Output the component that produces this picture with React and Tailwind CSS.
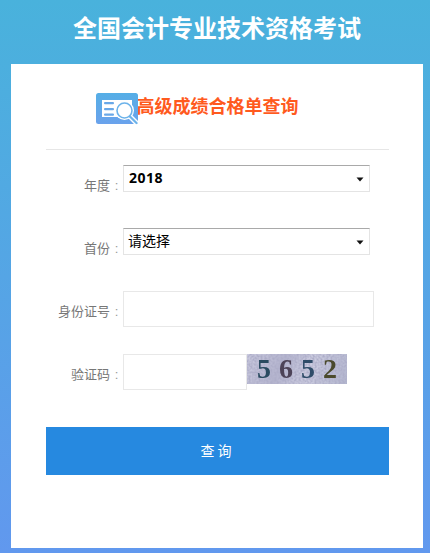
const cjk = "font-['Liberation_Sans','Noto_Sans_CJK_SC',sans-serif]";

function Field({ label, shift, children, className }) {
  return (
    <div className={`flex ${className}`}>
      <label className={`w-[77px] shrink-0 self-end text-right text-[13px] leading-[20px] text-[#777] ${shift}`}>
        {label}
        <span className="inline-block w-[13px] text-center text-[#999]">:</span>
      </label>
      {children}
    </div>
  );
}

function Select({ value, bold }) {
  return (
    <div className="relative h-[27px] w-[247px] border border-[#e4e4e4] border-t-[#a9a9a9] bg-white">
      <select
        defaultValue={value}
        className={`h-full w-full appearance-none bg-transparent outline-none text-black ${bold ? "pb-[5px] pl-[5px] text-[14px] font-bold tracking-[0.5px] font-['Noto_Sans',sans-serif]" : "pb-[3px] pl-[4px] text-[14px]"}`}
      >
        <option>{value}</option>
      </select>
      <svg className="pointer-events-none absolute right-[5px] top-[11px]" width="8" height="5" viewBox="0 0 8 5">
        <path d="M0.5 0.5H7.5L4 4.5Z" fill="#111" />
      </svg>
    </div>
  );
}

function Logo() {
  return (
    <svg className="absolute left-[-41px] top-[-1px]" width="43" height="32" viewBox="0 0 43 32">
      <defs>
        <linearGradient id="lg" x1="0" y1="0" x2="0" y2="1">
          <stop offset="0" stopColor="#55aee6" />
          <stop offset="1" stopColor="#6aa2ec" />
        </linearGradient>
      </defs>
      <rect x="0" y="0" width="42" height="31" rx="2.5" fill="url(#lg)" />
      <rect x="6" y="7" width="30" height="17" fill="#fff" />
      <rect x="8" y="9" width="10" height="2.2" rx="1" fill="#69a8e8" />
      <rect x="8" y="15" width="10" height="2.2" rx="1" fill="#69a8e8" />
      <rect x="8" y="20.5" width="10" height="2.2" rx="1" fill="#69a8e8" />
      <path d="M34 23.5L41 30.5" stroke="#fff" strokeWidth="5" />
      <circle cx="28.5" cy="17.5" r="9.5" fill="#fff" />
      <circle cx="28.5" cy="17.5" r="7.5" fill="#fff" stroke="#6cb3ea" strokeWidth="1.6" />
      <path d="M34 23.5L40.5 30" stroke="#6cb3ea" strokeWidth="2.2" strokeLinecap="round" />
    </svg>
  );
}

function Captcha() {
  return (
    <div className="relative flex h-[30px] w-[100px] items-center gap-[8px] overflow-hidden bg-[linear-gradient(115deg,#c9c9de,#b4b4ce_35%,#ccccE0_60%,#b2b6ce)] pl-[10px] font-['Liberation_Serif',serif] text-[28px] font-bold leading-none">
      <svg className="absolute inset-0" width="100" height="30">
        <filter id="noise">
          <feTurbulence type="fractalNoise" baseFrequency="0.5" numOctaves="2" seed="4" />
          <feColorMatrix values="0 0 0 0 0.42  0 0 0 0 0.42  0 0 0 0 0.58  0 0 0 2.4 -0.8" />
        </filter>
        <rect width="100" height="30" filter="url(#noise)" />
      </svg>
      <span className="relative text-[#2a4a60] blur-[0.4px]">5</span>
      <span className="relative text-[#4d4358] blur-[0.4px]">6</span>
      <span className="relative text-[#2f4c68] blur-[0.4px]">5</span>
      <span className="relative text-[#4b4a2c] blur-[0.4px]">2</span>
    </div>
  );
}

export default function App() {
  return (
    <div className={`flex h-[553px] w-full flex-col overflow-hidden bg-[linear-gradient(180deg,#49b2dc,#6198ee)] pl-[11px] pr-[7px] pb-[5px] ${cjk}`}>
      <h1 className="flex h-[64px] shrink-0 items-center justify-center pb-[6px] text-[24px] font-bold text-white">全国会计专业技术资格考试</h1>
      <main className="flex-1 bg-white px-[35px] pr-[34px]">
        <div className="flex h-[86px] justify-center border-b border-[#e6e6e6] pt-[30px]">
          <div className="relative h-[26px] text-[18px] font-bold leading-[26px] text-[#ff5a1e]">
            <Logo />
            高级成绩合格单查询
          </div>
        </div>
        <Field label="年度" shift="translate-y-[4px]" className="mt-[15px]">
          <Select value="2018" bold />
        </Field>
        <Field label="首份" shift="translate-y-[4px]" className="mt-[36px]">
          <Select value="请选择" />
        </Field>
        <Field label="身份证号" shift="pb-[5px]" className="mt-[36px]">
          <input className="h-[36px] w-[251px] border border-[#e8e8e8] outline-none" />
        </Field>
        <Field label="验证码" shift="pb-[5px]" className="mt-[27px]">
          <input className="h-[36px] w-[124px] border border-[#e8e8e8] outline-none" />
          <Captcha />
        </Field>
        <button className="mt-[37px] h-[48px] w-full bg-[#2689e0] text-[14px] tracking-[3px] text-white">查询</button>
      </main>
    </div>
  );
}
